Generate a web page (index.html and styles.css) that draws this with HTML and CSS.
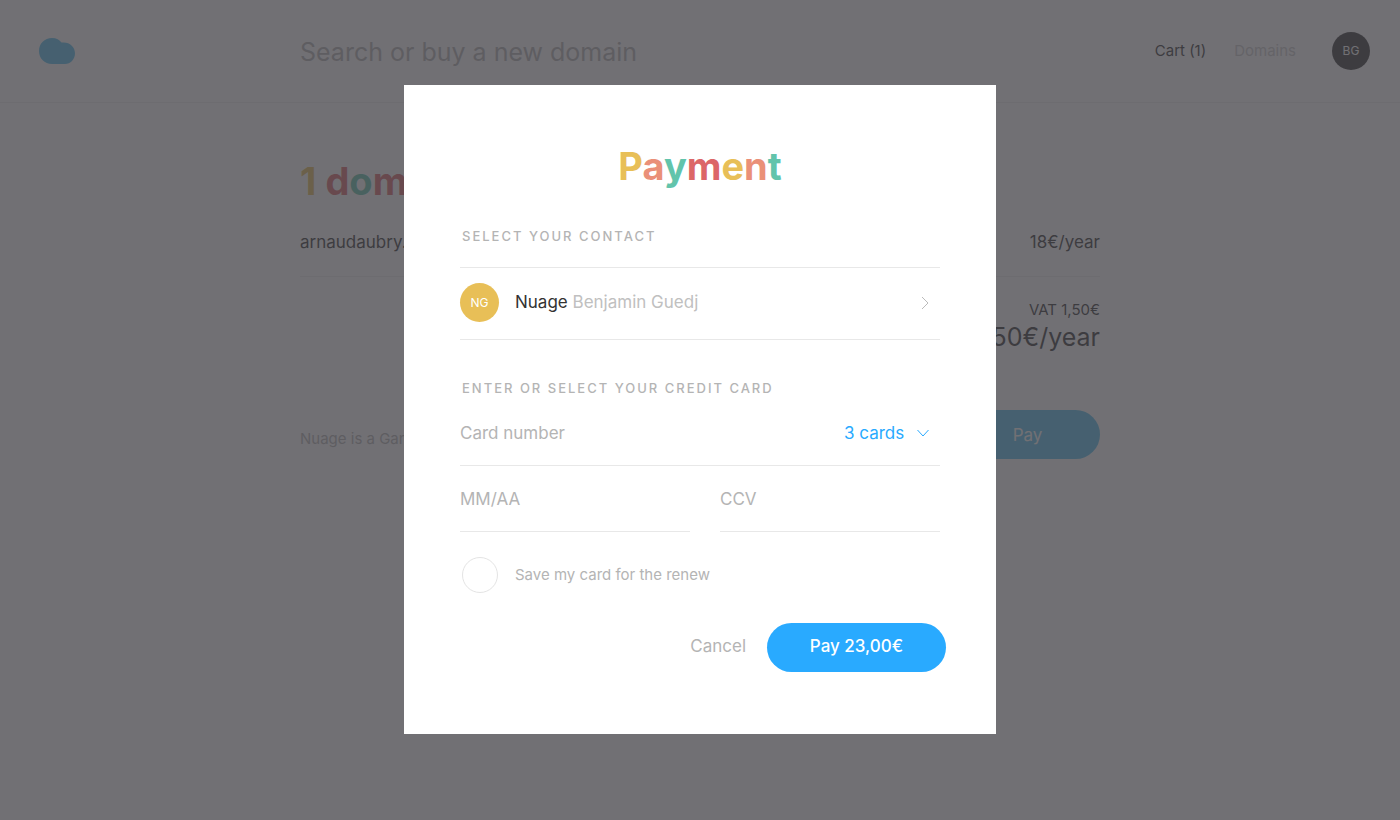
FILE: index.html
```html
<!DOCTYPE html>
<html lang="en">
<head>
    <meta charset="UTF-8">
    <meta name="viewport" content="width=device-width, initial-scale=1.0">
    <title>Nuage - Payment</title>
    <link rel="stylesheet" href="styles.css">
</head>
<body>
    <header class="header">
        <a href="#" class="logo" aria-label="Nuage">
            <svg width="36" height="26" viewBox="0 0 36 26">
                <path d="M13 0C17.500 0 20.500 1.800 22.500 4.600C30 3.400 36 8.500 36 15.300C36 21.500 31.500 26 26 26H13C5.500 26 0 20.500 0 13C0 5.500 5.500 0 13 0Z" fill="#55c0ee"/>
            </svg>
        </a>
        <input type="text" class="search" placeholder="Search or buy a new domain" aria-label="Search or buy a new domain">
        <nav class="nav">
            <a href="#" class="cart">Cart (1)</a>
            <a href="#" class="domains">Domains</a>
            <a href="#" class="user">BG</a>
        </nav>
    </header>

    <main class="order">
        <h1 class="title"><span class="yellow">1</span> <span class="red">d</span><span class="green">o</span><span class="red">m</span><span class="yellow">a</span><span class="orange">i</span><span class="green">n</span></h1>
        <div class="line">
            <span>arnaudaubry.com</span>
            <span>18€/year</span>
        </div>
        <div class="total">
            <span class="vat">VAT 1,50€</span>
            <span class="price">19,50€/year</span>
        </div>
        <div class="order-footer">
            <p class="note">Nuage is a Gandi reseller</p>
            <button type="button" class="btn order-pay">Pay</button>
        </div>
    </main>

    <div class="overlay">
        <form class="modal" role="dialog" aria-labelledby="payment-title">
            <h2 class="title modal-title" id="payment-title"><span class="yellow">P</span><span class="orange">a</span><span class="green">y</span><span class="red">m</span><span class="yellow">e</span><span class="orange">n</span><span class="green">t</span></h2>

            <h3 class="label">SELECT YOUR CONTACT</h3>
            <button type="button" class="contact">
                <span class="avatar">NG</span>
                <span class="name">Nuage <span class="owner">Benjamin Guedj</span></span>
                <svg class="chevron" width="8" height="14" viewBox="0 0 8 14" fill="none" stroke="#bbb">
                    <path d="M1 2L7 8L1 14"/>
                </svg>
            </button>

            <h3 class="label">ENTER OR SELECT YOUR CREDIT CARD</h3>
            <div class="field card">
                <input type="text" placeholder="Card number" aria-label="Card number">
                <select class="cards" aria-label="Saved cards">
                    <option>3 cards</option>
                </select>
                <svg class="chevron" width="12" height="8" viewBox="0 0 12 8" fill="none" stroke="#29aaff">
                    <path d="M0.500 1L6 7L11.500 1"/>
                </svg>
            </div>
            <div class="row">
                <div class="field date">
                    <input type="text" placeholder="MM/AA" aria-label="Expiry date">
                </div>
                <div class="field ccv">
                    <input type="text" placeholder="CCV" aria-label="CCV">
                </div>
            </div>

            <div class="save">
                <input type="checkbox" id="save-card">
                <label for="save-card">Save my card for the renew</label>
            </div>

            <div class="actions">
                <button type="button" class="cancel">Cancel</button>
                <button type="submit" class="btn">Pay 23,00€</button>
            </div>
        </form>
    </div>
</body>
</html>
```
FILE: styles.css
```css
* {
    box-sizing: border-box;
}

body {
    margin: 0;
    font-family: Inter, "Liberation Sans", sans-serif;
    font-size: 17px;
    line-height: 24px;
    color: #333;
    background-color: #fff;
}

a {
    color: inherit;
    text-decoration: none;
}

button,
input,
select {
    font: inherit;
    color: inherit;
    margin: 0;
    padding: 0;
    border: none;
    background: none;
    outline: none;
}

button {
    cursor: pointer;
}

/* header */
.header {
    display: flex;
    align-items: center;
    height: 103px;
    padding: 0 30px 0 39px;
    border-bottom: 1px solid #f0f0f0;
}

.logo {
    display: flex;
    width: 261px;
}

.search {
    flex: 1;
    min-width: 0;
    height: 40px;
    padding-top: 2px;
    font-size: 25px;
}

.search::placeholder {
    color: #b4b4b4;
    opacity: 1;
}

.nav {
    display: flex;
    align-items: center;
    gap: 28px;
    font-size: 15px;
}

.domains {
    color: #ccc;
}

.user {
    width: 38px;
    margin-left: 8px;
    border-radius: 50%;
    background-color: #333;
    color: #fff;
    font-size: 12px;
    line-height: 38px;
    text-align: center;
}

/* order */
.order {
    max-width: 800px;
    margin: 0 auto;
    padding-top: 54px;
}

.title {
    margin: 0;
    font-size: 38px;
    line-height: 48px;
    font-weight: 700;
}

.yellow { color: #e8bf57; }
.orange { color: #ea9078; }
.green { color: #62c4ab; }
.red { color: #dc6668; }

.line {
    display: flex;
    justify-content: space-between;
    padding: 25px 0 22px;
    border-bottom: 1px solid #f0f0f0;
}

.total {
    display: flex;
    flex-direction: column;
    align-items: flex-end;
    padding-top: 21px;
}

.vat {
    font-size: 15px;
}

.price {
    font-size: 25px;
    line-height: 30px;
}

.order-footer {
    display: flex;
    align-items: flex-end;
    justify-content: space-between;
    padding-top: 58px;
}

.note {
    margin: 0 0 8px;
    color: #b4b4b4;
    font-size: 15px;
}

.btn {
    width: 179px;
    height: 49px;
    padding-bottom: 2px;
    border-radius: 25px;
    background-color: #29aaff;
    color: #fff;
    font-weight: 500;
}

.order-pay {
    width: 145px;
    padding-bottom: 0;
    background-color: #55c0ee;
    font-weight: 400;
}

/* modal */
.overlay {
    position: fixed;
    inset: 0;
    display: flex;
    align-items: center;
    justify-content: center;
    padding-bottom: 2px;
    background-color: rgba(66, 64, 70, 0.75);
}

.modal {
    width: 592px;
    padding: 57px 56px 62px;
    background-color: #fff;
}

.modal-title {
    margin-bottom: 34px;
    text-align: center;
}

.label {
    margin: 0;
    padding-left: 2px;
    color: #b4b4b4;
    font-size: 13px;
    line-height: 24px;
    font-weight: 500;
    letter-spacing: 2px;
}

.contact {
    display: flex;
    align-items: center;
    width: 100%;
    height: 73px;
    margin: 19px 0 36px;
    padding: 0 11px 2px 0;
    border-top: 1px solid #e8e8e8;
    border-bottom: 1px solid #e8e8e8;
}

.avatar {
    width: 39px;
    border-radius: 50%;
    background-color: #e8bf57;
    color: #fff;
    font-size: 12px;
    line-height: 39px;
}

.name {
    flex: 1;
    padding-left: 16px;
    text-align: left;
}

.owner {
    color: #c0c0c0;
}

.field {
    display: flex;
    align-items: center;
    height: 66px;
    padding-top: 2px;
    border-bottom: 1px solid #e8e8e8;
}

.field input {
    flex: 1;
    min-width: 0;
}

.field input::placeholder {
    color: #b4b4b4;
    opacity: 1;
}

.card {
    padding-right: 11px;
}

.cards {
    margin-right: 12px;
    appearance: none;
    color: #29aaff;
}

.row {
    display: flex;
    gap: 30px;
}

.date,
.ccv {
    flex: 1;
    min-width: 0;
}

.date {
    flex-basis: 10px;
}

.save {
    display: flex;
    align-items: center;
    gap: 17px;
    padding: 25px 2px 30px;
    color: #b4b4b4;
    font-size: 15px;
}

.save input {
    width: 36px;
    height: 36px;
    appearance: none;
    border: 1px solid #e4e4e4;
    border-radius: 50%;
}

.save input:checked {
    background-color: #29aaff;
}

.actions {
    display: flex;
    justify-content: flex-end;
    gap: 21px;
    margin-right: -6px;
}

.cancel {
    padding-bottom: 2px;
    color: #b4b4b4;
}
```
